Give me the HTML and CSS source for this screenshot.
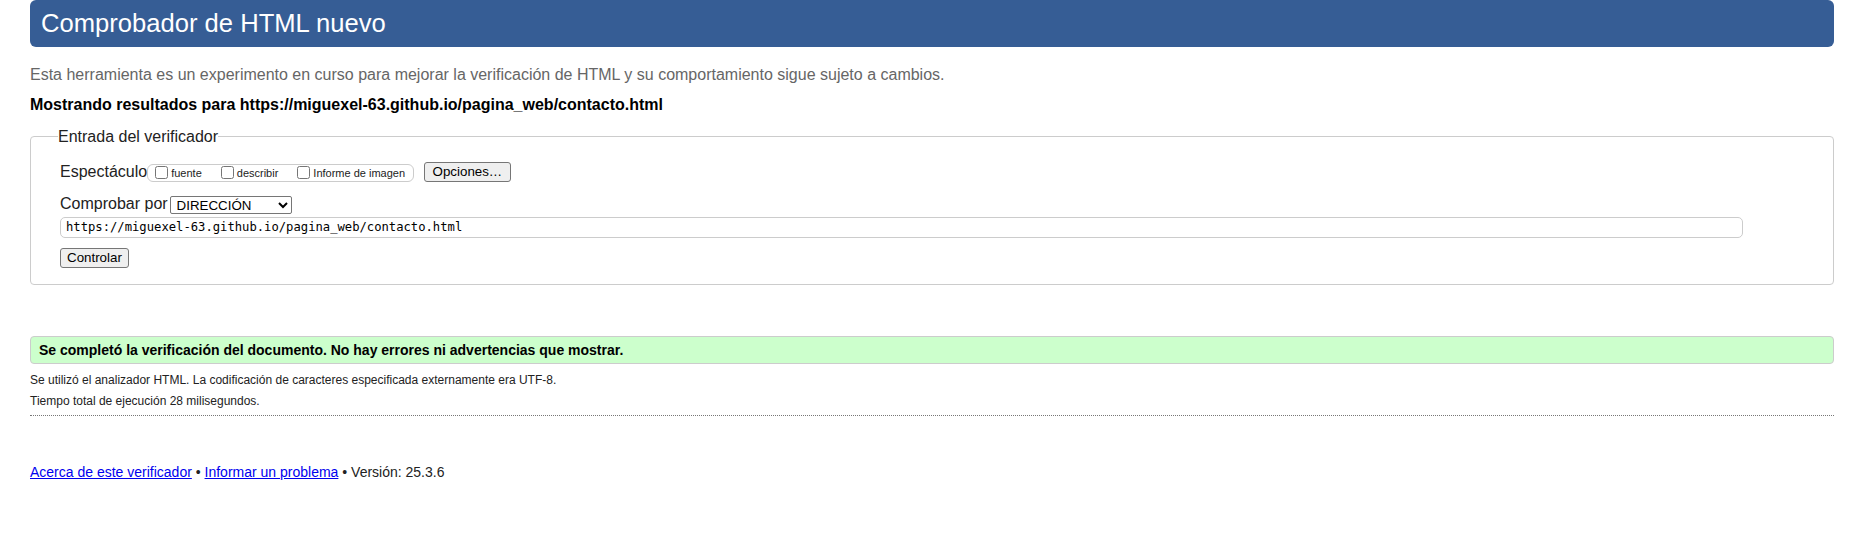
FILE: index.html
```html
<!DOCTYPE html>
<html lang="es">
<head>
<meta charset="utf-8">
<title>Comprobador de HTML nuevo</title>
<link rel="stylesheet" href="styles.css">
</head>
<body>
<h1 class="title">Comprobador de HTML nuevo</h1>
<p class="intro">Esta herramienta es un experimento en curso para mejorar la verificación de HTML y su comportamiento sigue sujeto a cambios.</p>
<p class="showing">Mostrando resultados para https://miguexel-63.github.io/pagina_web/contacto.html</p>
<form class="checker">
  <fieldset class="input-box">
    <legend class="legend">Entrada del verificador</legend>
    <div class="row row-show">
      <span class="row-label">Espectáculo</span>
      <span class="opts">
        <label class="opt"><input type="checkbox" class="cb"><span>fuente</span></label>
        <label class="opt"><input type="checkbox" class="cb"><span>describir</span></label>
        <label class="opt"><input type="checkbox" class="cb"><span>Informe de imagen</span></label>
      </span>
      <button type="button" class="btn btn-opts">Opciones…</button>
    </div>
    <div class="row row-by">
      <span class="row-label">Comprobar por</span>
      <select class="sel"><option>DIRECCIÓN</option></select>
    </div>
    <input class="url" type="text" value="https://miguexel-63.github.io/pagina_web/contacto.html">
    <div class="row-submit"><button type="button" class="btn">Controlar</button></div>
  </fieldset>
</form>
<p class="success">Se completó la verificación del documento. No hay errores ni advertencias que mostrar.</p>
<div class="details">
  <p class="detail">Se utilizó el analizador HTML. La codificación de caracteres especificada externamente era UTF-8.</p>
  <p class="detail">Tiempo total de ejecución 28 milisegundos.</p>
</div>
<p class="footer"><a href="#">Acerca de este verificador</a> • <a href="#">Informar un problema</a> • Versión: 25.3.6</p>
</body>
</html>
```
FILE: styles.css
```css
html, body {
  margin: 0;
  background: #fff;
}
body {
  padding: 0 19px 0 30px;
  font-family: "Liberation Sans", Arial, sans-serif;
  font-size: 16px;
  color: #222;
}
.title {
  margin: 0;
  height: 47px;
  line-height: 47px;
  padding: 0 0 0 11px;
  background: #365d95;
  color: #fff;
  font-size: 25.6px;
  font-weight: normal;
  border-radius: 6px;
}
.intro {
  margin: 17.5px 0 0;
  line-height: 20px;
  color: #666;
}
.showing {
  margin: 10px 0 0;
  line-height: 20px;
  font-weight: bold;
  color: #000;
}
.checker {
  margin: 13px 0 0;
}
.input-box {
  margin: 0;
  padding: 16px 90px 16px 29px;
  border: 1px solid #ccc;
  border-radius: 4px;
}
.legend {
  padding: 0;
  margin-left: -2px;
  color: #222;
}
.row {
  display: flex;
  align-items: flex-end;
}
.row-show {
  height: 20px;
}
.row-by {
  margin-top: 14px;
  height: 18px;
}
.row-label {
  line-height: 18.4px;
}
.opts {
  display: flex;
  align-items: center;
  box-sizing: border-box;
  height: 18px;
  padding: 0 7.5px 0 7px;
  border: 1px solid #ccc;
  border-radius: 6px;
  gap: 19px;
}
.opt {
  display: flex;
  align-items: center;
  gap: 3px;
  font-size: 11px;
  color: #222;
}
.cb {
  width: 13px;
  height: 13px;
  margin: 0;
}
.btn {
  box-sizing: border-box;
  height: 20px;
  padding: 0 6px;
  background: #efefef;
  border: 1px solid #767676;
  border-radius: 3px;
  font-family: "Liberation Sans", Arial, sans-serif;
  font-size: 13.33px;
  color: #000;
}
.btn-opts {
  margin-left: 10px;
  padding: 0 8px;
}
.sel {
  box-sizing: border-box;
  width: 122px;
  height: 18px;
  margin-left: 2px;
  padding: 0 0 0 2px;
  font-family: "Liberation Sans", Arial, sans-serif;
  font-size: 13.33px;
  color: #000;
  border: 1px solid #767676;
  border-radius: 2px;
  background: #fff;
}
.url {
  display: block;
  box-sizing: border-box;
  width: 100%;
  height: 21px;
  margin: 3px 0 0;
  padding: 0 5px;
  border: 1px solid #ccc;
  border-radius: 5px;
  font-family: "DejaVu Sans Mono", "Liberation Mono", monospace;
  font-size: 12.2px;
  color: #000;
}
.row-submit {
  margin-top: 10px;
  height: 20px;
}
.success {
  margin: 51px 0 0;
  box-sizing: border-box;
  height: 28px;
  line-height: 26px;
  padding: 0 8px;
  background: #ccffcc;
  border: 1px solid #ccc;
  border-radius: 4px;
  font-size: 14px;
  font-weight: bold;
  color: #000;
}
.details {
  margin-top: 6px;
  padding-bottom: 3px;
  border-bottom: 1px dotted #777;
}
.detail {
  margin: 0;
  font-size: 12px;
  line-height: 21px;
  color: #222;
}
.footer {
  margin: 48px 0 0;
  font-size: 14px;
  color: #222;
}
.footer a {
  color: #0000ee;
}
```
